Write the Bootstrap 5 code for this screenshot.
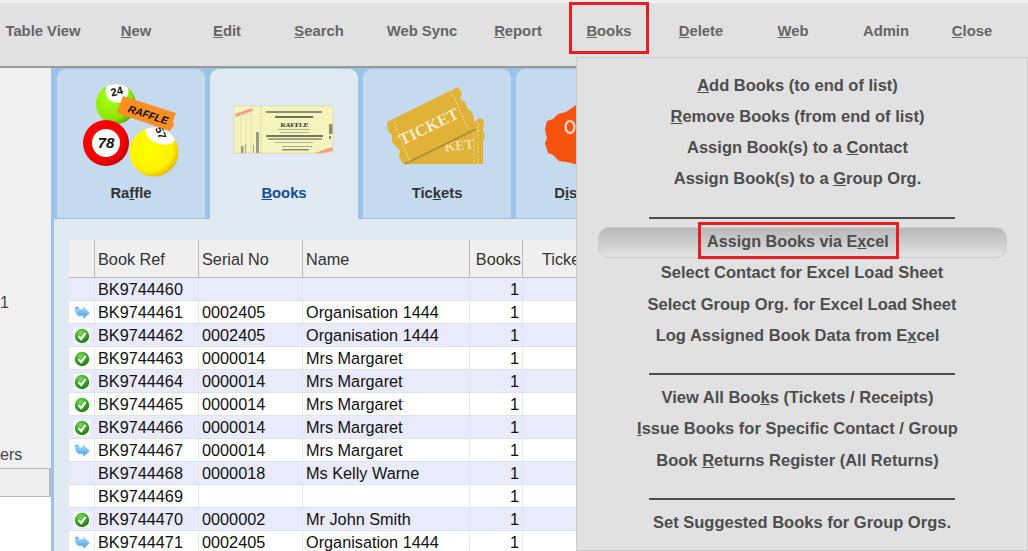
<!DOCTYPE html>
<html lang="en">
<head>
<meta charset="utf-8">
<title>Books</title>
<link href="https://cdn.jsdelivr.net/npm/bootstrap@5.3.0/dist/css/bootstrap.min.css" rel="stylesheet">
<style>
html,body{height:551px;overflow:hidden}
body{font-family:"Liberation Sans",Arial,sans-serif;font-size:16px;background:#f0f0f0;color:#111}
.page-root{width:1028px;height:551px}
.top-tools{margin-top:3px;height:65px;background:#e1e1e1;border-bottom:2px solid #999;display:grid;grid-template-columns:86px 100px 82px 102px 104px 88px 94px 90px 94px 92px 80px;padding-top:19px;color:#666;font-weight:700;font-size:14.8px;line-height:18px;text-align:center}
.main-area{height:483px}
.side-pane{width:51px;background:#f0f0f0;color:#444;flex:none}
.side-one{margin-top:225px;height:20px;line-height:20px}
.side-ers{margin-top:132px;height:20px;line-height:20px}
.side-box{margin-top:3px;height:29px;background:#efefef;border:1px solid #bbb;border-left:0;border-right-width:2px}
.side-blank{background:#fff;flex:1}
.work-pane{flex:1;min-width:0;background:#9cc4e8;padding-left:3px}
.tab-strip{padding-left:3px;height:151px;flex:none;gap:5px;padding-top:1px}
.tab-item{width:148px;flex:none;background:#c5daef;border-radius:9px 9px 0 0;color:#333;font-weight:700;font-size:14.8px;text-align:center;line-height:18px}
.tab-item svg{display:block;height:115px;width:148px}
.tab-item.is-on{background:#e1e9f2;color:#0f4c9d;height:152px;position:relative}
.panel-body{background:#e1e9f2;padding:21px 0 0 15px;flex:1;min-height:0;overflow:hidden;border-top:1px solid #9cc4e8;margin-top:-1px}
.bk-table{--bs-table-bg:transparent;--bs-table-color:#111;table-layout:fixed;width:700px;margin:0;font-size:16.25px;line-height:18px;border-collapse:separate;border-spacing:0}
.bk-table>thead>tr>th{height:38px;padding:0 3px;background:#efefef;font-weight:400;color:#333;border-bottom:1px solid #bbb;border-right:1px solid #bbb;vertical-align:middle}
.bk-table>tbody>tr>td{height:23px;padding:0 3px;border-bottom:1px solid #dfe3ea;border-right:1px solid #e2e6ee;vertical-align:middle;white-space:nowrap}
.bk-table>tbody>tr:nth-child(odd)>td{background:#e9eafb}
.bk-table>tbody>tr:nth-child(even)>td{background:#fff}
.bk-table td.mark-cell{padding:0;text-align:center}
.mark-cell svg{display:inline-block;vertical-align:middle;margin-top:-2px;margin-left:1px}
.col-books-head{text-align:right;padding-right:1px!important}
.col-ticket-head{padding-left:19px!important}
.drop-menu{left:576px;top:57px;width:452px;height:494px;background:#e1e1e1;border:1px solid #ccc;padding-top:11.5px;color:#4d4d4d;font-weight:700;font-size:16.5px;text-align:center;z-index:5}
.drop-item{height:31.33px;line-height:31.33px;padding-right:9px;white-space:nowrap}
.drop-item.wide{padding-right:0}
.drop-sep{height:30.6px;padding-top:22px}
.drop-sep.first-sep{height:31.6px}
.drop-sep hr{width:306px;height:2px;margin:0 auto;background:#4d4d4d;border:0;opacity:1}
.drop-hot{margin:1px 20px -1px 21px;padding-right:0;height:31px;line-height:27px;border:1px solid #ccc;border-radius:11px;background:linear-gradient(#b8b8b8,#e2e2e2);text-indent:-9px;font-size:16.2px}
.red-flag{border:3px solid #ed1c24;z-index:6;pointer-events:none}
.flag-one{left:569px;top:2px;width:80px;height:52px}
.flag-two{left:698px;top:222px;width:201px;height:37px}
</style>
</head>
<body>
<svg width="0" height="0" class="position-absolute">
<defs>
<radialGradient id="gGreen" cx=".35" cy=".35" r=".75"><stop offset="0" stop-color="#a8ff10"/><stop offset=".7" stop-color="#8fe60a"/><stop offset="1" stop-color="#5c9c04"/></radialGradient>
<radialGradient id="gRed" cx=".4" cy=".4" r=".7"><stop offset="0" stop-color="#ff0000"/><stop offset=".7" stop-color="#f40000"/><stop offset="1" stop-color="#a80000"/></radialGradient>
<radialGradient id="gYel" cx=".4" cy=".4" r=".72"><stop offset="0" stop-color="#ffff00"/><stop offset=".68" stop-color="#fff000"/><stop offset="1" stop-color="#d89a00"/></radialGradient>
<radialGradient id="gChk" cx=".4" cy=".3" r=".8"><stop offset="0" stop-color="#7fd85a"/><stop offset=".6" stop-color="#2f9e1e"/><stop offset="1" stop-color="#0f6b0c"/></radialGradient>
<linearGradient id="gArr" x1="0" y1="0" x2="0" y2="1"><stop offset="0" stop-color="#a9e0fb"/><stop offset="1" stop-color="#3f9fe6"/></linearGradient>
<clipPath id="cpGreen"><circle cx="59" cy="35" r="20"/></clipPath>
<clipPath id="cpYel"><circle cx="97" cy="83" r="24.5"/></clipPath>
<symbol id="i-ok" viewBox="0 0 16 16"><rect width="16" height="16" fill="#fff"/><circle cx="8" cy="8" r="7.2" fill="url(#gChk)"/><path d="M4.6 8.2 7.2 11 11.6 4.8" fill="none" stroke="#fff" stroke-width="2.1"/></symbol>
<symbol id="i-go" viewBox="0 0 16 16"><path d="M1 3c1-1.600 2.800-1.600 3.600 0 .4 1 .8 1.800 2.400 1.800H9.500V2.200L15.500 8 9.500 13.400v-2.600H6C3 10.800 1.500 8 1 3z" fill="url(#gArr)" stroke="#6fb6ea" stroke-width=".5"/><path d="M2 3c.8-.8 1.700-.6 2 .4" fill="none" stroke="#1f6fb5" stroke-width=".8"/></symbol>
</defs>
</svg>

<div class="page-root position-relative overflow-hidden">
  <div class="top-tools">
    <div>Table View</div><div><u>N</u>ew</div><div><u>E</u>dit</div><div><u>S</u>earch</div><div>Web Sync</div><div><u>R</u>eport</div><div><u>B</u>ooks</div><div><u>D</u>elete</div><div><u>W</u>eb</div><div>Admin</div><div><u>C</u>lose</div>
  </div>

  <div class="main-area d-flex">
    <div class="side-pane d-flex flex-column overflow-hidden">
      <div class="side-one">1</div>
      <div class="side-ers">ers</div>
      <div class="side-box"></div>
      <div class="side-blank"></div>
    </div>

    <div class="work-pane d-flex flex-column overflow-hidden">
      <div class="tab-strip d-flex">
        <div class="tab-item">
          <svg viewBox="0 0 148 115" aria-hidden="true">
            <circle cx="59" cy="35" r="20" fill="url(#gGreen)"/>
            <g clip-path="url(#cpGreen)"><circle cx="60" cy="22" r="11.500" fill="#fff"/></g>
            <text x="60" y="26" text-anchor="middle" font-family="Liberation Sans" font-weight="700" font-size="11" fill="#111" transform="rotate(-14 60 23)">24</text>
            <circle cx="49" cy="74" r="23" fill="url(#gRed)"/>
            <circle cx="49" cy="74" r="14" fill="#fff"/>
            <text x="49" y="79" text-anchor="middle" font-family="Liberation Sans" font-weight="700" font-style="italic" font-size="15" fill="#111">78</text>
            <circle cx="97" cy="83" r="24.500" fill="url(#gYel)"/>
            <g clip-path="url(#cpYel)"><ellipse cx="104" cy="64" rx="16" ry="11" fill="#fff" transform="rotate(20 104 64)"/></g>
            <text x="103" y="67" text-anchor="middle" font-family="Liberation Sans" font-weight="700" font-size="11" fill="#111" transform="rotate(70 103 64)">57</text>
            <path d="M66 27 119 44 116 52 117 56 113 62 60 44 62 38z" fill="#ff8f22"/>
            <text x="91" y="49.500" text-anchor="middle" font-family="Liberation Sans" font-weight="700" font-style="italic" font-size="10.500" fill="#111" transform="rotate(18 91 46)">RAFFLE</text>
          </svg>
          <div class="tab-cap">Ra<u>f</u>fle</div>
        </div>
        <div class="tab-item is-on">
          <svg viewBox="0 0 148 115" aria-hidden="true">
            <rect x="24" y="37" width="99" height="47" fill="#f5f4bc" stroke="#d3d29a" stroke-width=".6"/>
            <path d="M25 45 42 39 43 42 26 48z" fill="#f59a90"/>
            <path d="M105 84 122 78 123 82 113 84z" fill="#f59a90"/>
            <path d="M31 44V84M36 43V84M41 41V84" stroke="#e3e2b0" stroke-width="1"/>
            <path d="M51 38V84" stroke="#c9c99a" stroke-dasharray="1.500 1.500"/>
            <rect x="31" y="77" width="2.500" height="7" fill="#9c9c80"/><rect x="35" y="75" width="1" height="9" fill="#a5a58a"/><rect x="43" y="76" width="1" height="8" fill="#a5a58a"/><rect x="46" y="63" width="3" height="21" fill="#9c9c80"/>
            <rect x="119" y="55" width="3.500" height="10" fill="#8c8c74"/><rect x="119" y="67" width="2" height="3" fill="#8c8c74"/>
            <rect x="56" y="42" width="56" height="2" fill="#8c8c74"/>
            <rect x="65" y="47" width="38" height="2" fill="#6e6e58"/>
            <text x="84.500" y="58" text-anchor="middle" font-family="Liberation Serif" font-weight="700" font-size="7" fill="#333">RAFFLE</text>
            <rect x="68" y="60" width="32" height="1" fill="#b5b598"/><rect x="70" y="63" width="29" height="1" fill="#b5b598"/>
            <rect x="56" y="66" width="57" height="2" fill="#77775f"/><rect x="58" y="69" width="54" height="2" fill="#a5a58a"/>
            <rect x="65" y="73" width="38" height="1" fill="#b5b598"/><rect x="72" y="77" width="30" height="1" fill="#a5a58a"/><rect x="72" y="80" width="27" height="1.500" fill="#8c8c74"/>
          </svg>
          <div class="tab-cap"><u>B</u>ooks</div>
        </div>
        <div class="tab-item">
          <svg viewBox="0 0 148 115" aria-hidden="true">
            <path d="M40 95 113 52 116 49 121 51 120 62 122 67 120 72 120 95z" fill="#e0b238"/>
            <path d="M111 56V95M115 54V95" stroke="#f2e3b0" stroke-dasharray="2 1.500" stroke-width=".8"/>
            <text x="96" y="81" text-anchor="middle" font-family="Liberation Serif" font-size="14" fill="#efdca0" transform="rotate(-6 96 76)">KET</text>
            <path d="M24 53 95 18 99 24 97 30 102 33 104 39 109 43 113 59 40 95 36 88 37 82 29 73 29 66 25 62z" fill="#e0b238"/>
            <path d="M42 95 113 60" stroke="#a88a3c" stroke-width="1.400"/>
            <path d="M31 53 47 93M88 21 105 60" stroke="#f6ecc6" stroke-dasharray="2 1.500" stroke-width=".8"/>
            <text x="66" y="63" text-anchor="middle" font-family="Liberation Serif" font-size="16.500" fill="#f6ecc6" transform="rotate(-26 66 58)">TICKET</text>
          </svg>
          <div class="tab-cap">Tic<u>k</u>ets</div>
        </div>
        <div class="tab-item">
          <svg viewBox="0 0 148 115" aria-hidden="true">
            <path d="M31 52 37 50 42 45 50 43 60 36 90 36 96 96 68 96 62 96 55 94 50 93 43 92 37 86 32 84 29 74 31 70 29 60z" fill="#f5530e"/>
            <ellipse cx="54" cy="58" rx="4.500" ry="6" fill="none" stroke="#e6d6cf" stroke-width="2.200"/>
          </svg>
          <div class="tab-cap">D<u>i</u>scounts</div>
        </div>
      </div>

      <div class="panel-body">
        <table class="table bk-table">
          <colgroup><col style="width:26px"><col style="width:104px"><col style="width:104px"><col style="width:167px"><col style="width:53px"><col style="width:246px"></colgroup>
          <thead><tr><th></th><th>Book Ref</th><th>Serial No</th><th>Name</th><th class="col-books-head">Books</th><th class="col-ticket-head">Tickets</th></tr></thead>
          <tbody>
            <tr><td class="mark-cell"></td><td>BK9744460</td><td></td><td></td><td class="text-end">1</td><td></td></tr>
            <tr><td class="mark-cell"><svg width="16" height="16"><use href="#i-go"/></svg></td><td>BK9744461</td><td>0002405</td><td>Organisation 1444</td><td class="text-end">1</td><td></td></tr>
            <tr><td class="mark-cell"><svg width="16" height="16"><use href="#i-ok"/></svg></td><td>BK9744462</td><td>0002405</td><td>Organisation 1444</td><td class="text-end">1</td><td></td></tr>
            <tr><td class="mark-cell"><svg width="16" height="16"><use href="#i-ok"/></svg></td><td>BK9744463</td><td>0000014</td><td>Mrs Margaret</td><td class="text-end">1</td><td></td></tr>
            <tr><td class="mark-cell"><svg width="16" height="16"><use href="#i-ok"/></svg></td><td>BK9744464</td><td>0000014</td><td>Mrs Margaret</td><td class="text-end">1</td><td></td></tr>
            <tr><td class="mark-cell"><svg width="16" height="16"><use href="#i-ok"/></svg></td><td>BK9744465</td><td>0000014</td><td>Mrs Margaret</td><td class="text-end">1</td><td></td></tr>
            <tr><td class="mark-cell"><svg width="16" height="16"><use href="#i-ok"/></svg></td><td>BK9744466</td><td>0000014</td><td>Mrs Margaret</td><td class="text-end">1</td><td></td></tr>
            <tr><td class="mark-cell"><svg width="16" height="16"><use href="#i-go"/></svg></td><td>BK9744467</td><td>0000014</td><td>Mrs Margaret</td><td class="text-end">1</td><td></td></tr>
            <tr><td class="mark-cell"></td><td>BK9744468</td><td>0000018</td><td>Ms Kelly Warne</td><td class="text-end">1</td><td></td></tr>
            <tr><td class="mark-cell"></td><td>BK9744469</td><td></td><td></td><td class="text-end">1</td><td></td></tr>
            <tr><td class="mark-cell"><svg width="16" height="16"><use href="#i-ok"/></svg></td><td>BK9744470</td><td>0000002</td><td>Mr John Smith</td><td class="text-end">1</td><td></td></tr>
            <tr><td class="mark-cell"><svg width="16" height="16"><use href="#i-go"/></svg></td><td>BK9744471</td><td>0002405</td><td>Organisation 1444</td><td class="text-end">1</td><td></td></tr>
          </tbody>
        </table>
      </div>
    </div>
  </div>

  <div class="drop-menu position-absolute">
    <div class="drop-item"><u>A</u>dd Books (to end of list)</div>
    <div class="drop-item"><u>R</u>emove Books (from end of list)</div>
    <div class="drop-item">Assign Book(s) to a <u>C</u>ontact</div>
    <div class="drop-item">Assign Book(s) to a <u>G</u>roup Org.</div>
    <div class="drop-sep first-sep"><hr></div>
    <div class="drop-item drop-hot">Assign Books via E<u>x</u>cel</div>
    <div class="drop-item wide">Select Contact for Excel Load Sheet</div>
    <div class="drop-item wide">Select Group Org. for Excel Load Sheet</div>
    <div class="drop-item">Log Assigned Book Data from E<u>x</u>cel</div>
    <div class="drop-sep"><hr></div>
    <div class="drop-item">View All Boo<u>k</u>s (Tickets / Receipts)</div>
    <div class="drop-item"><u>I</u>ssue Books for Specific Contact / Group</div>
    <div class="drop-item">Book <u>R</u>eturns Register (All Returns)</div>
    <div class="drop-sep"><hr></div>
    <div class="drop-item wide">Set Suggested Books for Group Orgs.</div>
  </div>
  <div class="red-flag flag-one position-absolute"></div>
  <div class="red-flag flag-two position-absolute"></div>
</div>
<script src="https://cdn.jsdelivr.net/npm/bootstrap@5.3.0/dist/js/bootstrap.bundle.min.js"></script>
</body>
</html>
